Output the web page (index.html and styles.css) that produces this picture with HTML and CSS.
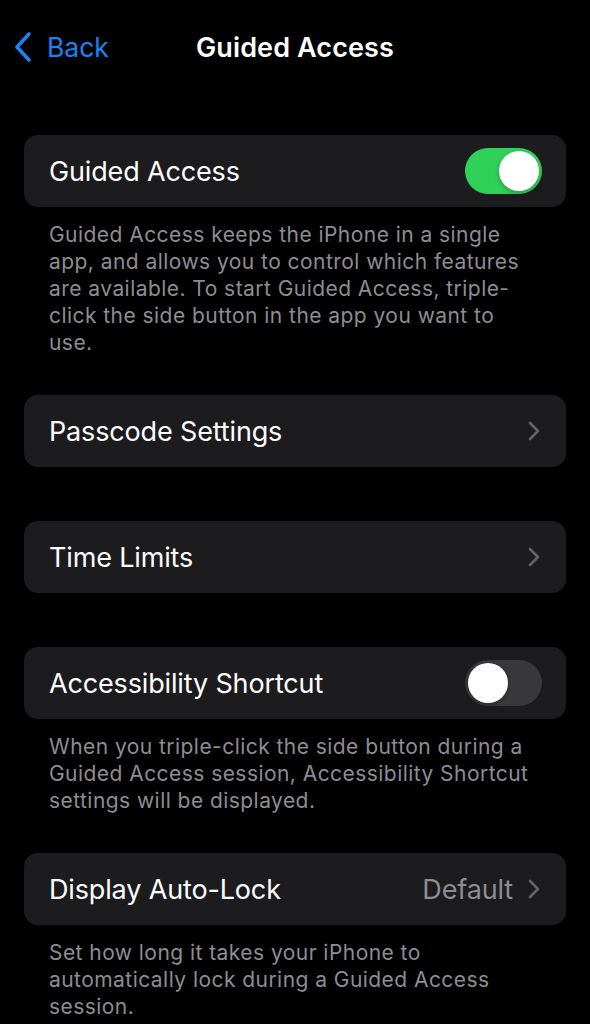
FILE: index.html
```html
<!DOCTYPE html>
<html lang="en">

<head>
    <meta charset="UTF-8" />
    <meta name="viewport" content="width=device-width, initial-scale=1.0" />
    <title>Guided Access</title>
    <link rel="stylesheet" href="styles.css">
</head>

<body>
    <div class="nav-bar">
        <a class="back" href="#">
            <svg class="back-icon" width="20" height="32" viewBox="0 0 20 32">
                <path d="M16 3 L4 16 L16 29" fill="none" stroke="currentColor" stroke-width="3.6"
                    stroke-linecap="round" stroke-linejoin="round" />
            </svg>
            <span>Back</span>
        </a>
        <h1 class="nav-title">Guided Access</h1>
    </div>

    <div class="content">
        <div class="group">
            <div class="cell">
                <span class="cell-label">Guided Access</span>
                <div class="switch on"><div class="knob"></div></div>
            </div>
            <p class="footer">Guided Access keeps the iPhone in a single app, and allows you to control which features
                are available. To start Guided Access, triple-click the side button in the app you want to use.</p>
        </div>

        <div class="group">
            <div class="cell">
                <span class="cell-label">Passcode Settings</span>
                <svg class="chevron" width="14" height="22" viewBox="0 0 14 22">
                    <path d="M3 3 L11 11 L3 19" fill="none" stroke="currentColor" stroke-width="2.6"
                        stroke-linecap="round" stroke-linejoin="round" />
                </svg>
            </div>
        </div>

        <div class="group">
            <div class="cell">
                <span class="cell-label">Time Limits</span>
                <svg class="chevron" width="14" height="22" viewBox="0 0 14 22">
                    <path d="M3 3 L11 11 L3 19" fill="none" stroke="currentColor" stroke-width="2.6"
                        stroke-linecap="round" stroke-linejoin="round" />
                </svg>
            </div>
        </div>

        <div class="group">
            <div class="cell">
                <span class="cell-label">Accessibility Shortcut</span>
                <div class="switch"><div class="knob"></div></div>
            </div>
            <p class="footer">When you triple-click the side button during a Guided Access session, Accessibility
                Shortcut settings will be displayed.</p>
        </div>

        <div class="group">
            <div class="cell">
                <span class="cell-label">Display Auto-Lock</span>
                <span class="cell-value">Default</span>
                <svg class="chevron" width="14" height="22" viewBox="0 0 14 22">
                    <path d="M3 3 L11 11 L3 19" fill="none" stroke="currentColor" stroke-width="2.6"
                        stroke-linecap="round" stroke-linejoin="round" />
                </svg>
            </div>
            <p class="footer">Set how long it takes your iPhone to automatically lock during a Guided Access session.</p>
        </div>
    </div>
</body>

</html>
```

FILE: styles.css
```css
html,
body {
    overflow: hidden;
}

body {
    margin: 0;
    background-color: #000;
    color: #fff;
    font-family: Inter, "Noto Sans", sans-serif;
    -webkit-font-smoothing: antialiased;
}

.nav-bar {
    position: relative;
    height: 94px;
    display: flex;
    align-items: center;
    justify-content: center;
}

.back {
    position: absolute;
    left: 13px;
    top: 31px;
    display: flex;
    align-items: center;
    gap: 14px;
    color: #1a84f4;
    text-decoration: none;
    font-size: 26.5px;
}

.back-icon {
    display: block;
}

.nav-title {
    margin: 0;
    font-size: 27px;
    font-weight: 600;
    letter-spacing: 0.1px;
}

.content {
    padding: 41px 24px 0;
}

.group {
    margin-bottom: 54px;
}

.group:has(.footer) {
    margin-bottom: 39px;
}

.cell {
    height: 72px;
    background-color: #1c1c1e;
    border-radius: 14px;
    display: flex;
    align-items: center;
    padding: 0 24px 0 25px;
}

.cell-label {
    flex: 1;
    font-size: 27px;
    letter-spacing: -0.15px;
}

.cell-value {
    font-size: 27px;
    color: #8d8d93;
    letter-spacing: -0.15px;
    margin-right: 14px;
}

.chevron {
    display: block;
    color: #636368;
    margin-right: 1px;
}

.switch {
    width: 77px;
    height: 46px;
    border-radius: 23px;
    background-color: #39393d;
    padding: 3px;
    box-sizing: border-box;
    display: flex;
}

.switch.on {
    background-color: #30d158;
    justify-content: flex-end;
}

.knob {
    width: 40px;
    height: 40px;
    border-radius: 50%;
    background-color: #fff;
    box-shadow: 0 2px 5px rgba(0, 0, 0, 0.25);
}

.footer {
    margin: 0;
    padding: 14px 27px 0 25px;
    font-size: 21px;
    line-height: 27px;
    color: #8d8d93;
    letter-spacing: 0.45px;
}
```
